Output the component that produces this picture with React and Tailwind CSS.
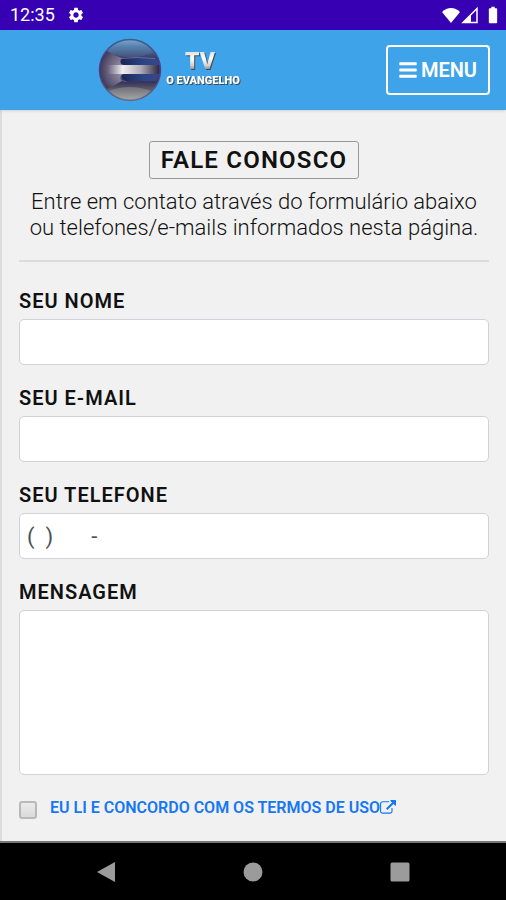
import React, { useState } from 'react';
import { FaBars } from 'react-icons/fa';
import { MdBatteryFull, MdSettings } from 'react-icons/md';

const inputClass =
  'w-full rounded-[5px] border border-[#cfd3d7] bg-white px-[7px] text-[22px] text-[#495057] focus:outline-none focus:border-blue-400';

const Logo = () => (
  <svg viewBox="0 0 146 64" className="h-16 w-auto" role="img" aria-label="TV O Evangelho">
    <defs>
      <linearGradient id="ball" x1="0" y1="0" x2="0" y2="1">
        <stop offset="0" stopColor="#78a6cf" />
        <stop offset="0.12" stopColor="#4f77a4" />
        <stop offset="0.3" stopColor="#373f68" />
        <stop offset="0.7" stopColor="#36345a" />
        <stop offset="0.85" stopColor="#66666f" />
        <stop offset="1" stopColor="#a2a2a6" />
      </linearGradient>
      <linearGradient id="rim" x1="0" y1="0" x2="0" y2="1">
        <stop offset="0" stopColor="#3c5f88" />
        <stop offset="0.5" stopColor="#4b3c94" />
        <stop offset="1" stopColor="#5d6a80" />
      </linearGradient>
      <radialGradient id="side" gradientUnits="userSpaceOnUse" cx="30" cy="32" r="29">
        <stop offset="0" stopColor="#d6d0da" />
        <stop offset="0.3" stopColor="#8d869d" />
        <stop offset="0.7" stopColor="#625b78" />
        <stop offset="1" stopColor="#37304f" />
      </radialGradient>
      <linearGradient id="bar" x1="0" y1="0" x2="1" y2="0">
        <stop offset="0" stopColor="#b9b3c2" stopOpacity="0" />
        <stop offset="0.3" stopColor="#f1eef2" />
        <stop offset="0.65" stopColor="#b0abb6" />
        <stop offset="1" stopColor="#2e2a45" />
      </linearGradient>
      <linearGradient id="slot" x1="0" y1="0" x2="1" y2="0">
        <stop offset="0" stopColor="#1d2453" />
        <stop offset="0.6" stopColor="#2a4586" />
        <stop offset="1" stopColor="#3d4486" />
      </linearGradient>
      <linearGradient id="metal" x1="0" y1="0" x2="0" y2="1">
        <stop offset="0" stopColor="#c9d3da" />
        <stop offset="0.4" stopColor="#ffffff" />
        <stop offset="0.65" stopColor="#d0d0d0" />
        <stop offset="1" stopColor="#2c2c2c" />
      </linearGradient>
    </defs>
    <circle cx="33" cy="32" r="30.5" fill="url(#ball)" stroke="url(#rim)" strokeWidth="1.5" />
    <path d="M10 13Q2 23 3 33Q4 43 10 51Q18 47 25 43H50V20H25Q18 18 10 13Z" fill="url(#side)" />
    <path d="M10 13Q19 3 33 3Q48 3 56 14Q45 20 33 19Q19 19 10 13Z" fill="#83b3dd" opacity="0.15" />
    <path d="M12 53Q22 49 33 49Q44 49 54 53Q45 61 33 61Q21 61 12 53Z" fill="#bcbcbe" opacity="0.3" />
    <path d="M27 20H59Q61 23 62 27H27Q23.500 27 23.500 23.500Q23.500 20 27 20Z" fill="url(#slot)" />
    <rect x="10" y="27" width="52" height="9" fill="url(#bar)" />
    <path d="M27 36H62Q61 40 59 43H27Q23.500 43 23.500 39.500Q23.500 36 27 36Z" fill="url(#slot)" />
    <path d="M25 20.500Q40 18.500 58 20.500M24 36.500Q23 43 29 43.500" fill="none" stroke="#9a86b0" strokeWidth="0.8" opacity="0.7" />
    <g
      className="drop-shadow-[1px_1px_0_#3f4c56]"
      fontFamily="Roboto, sans-serif"
      fontWeight="900"
      textAnchor="middle"
    >
      <text x="103" y="31" fontSize="23" fill="url(#metal)">TV</text>
      <text x="106" y="46" fontSize="11" fill="#ffffff">O EVANGELHO</text>
    </g>
  </svg>
);

const ExternalLinkIcon = () => (
  <svg viewBox="0 0 1792 1792" className="h-4 w-4" fill="currentColor" aria-hidden="true">
    <path d="M1408 928v320q0 119-84.5 203.5t-203.5 84.5h-832q-119 0-203.5-84.5t-84.5-203.5v-832q0-119 84.5-203.5t203.5-84.5h704q14 0 23 9t9 23v64q0 14-9 23t-23 9h-704q-66 0-113 47t-47 113v832q0 66 47 113t113 47h832q66 0 113-47t47-113v-320q0-14 9-23t23-9h64q14 0 23 9t9 23zm384-864v512q0 26-19 45t-45 19-45-19l-176-176-652 652q-10 10-23 10t-23-10l-114-114q-10-10-10-23t10-23l652-652-176-176q-19-19-19-45t19-45 45-19h512q26 0 45 19t19 45z" />
  </svg>
);

const StatusBar = () => (
  <div className="flex h-[30px] items-center justify-between bg-[#3700b3] pl-[10px] pr-[3px] text-white">
    <div className="flex items-center gap-3">
      <span className="text-lg leading-none">12:35</span>
      <MdSettings className="h-[18px] w-[18px]" />
    </div>
    <div className="flex items-center">
      <svg viewBox="0 0 20 18" className="h-[18px] w-5" fill="currentColor" aria-hidden="true">
        <path d="M10 17L1 6Q5 2 10 2T19 6Z" />
      </svg>
      <svg viewBox="0 0 18 18" className="h-[18px] w-[18px]" aria-hidden="true">
        <path d="M2 16.500L16 2.500V16.500Z" fill="none" stroke="currentColor" strokeWidth="1.500" />
        <path d="M2 16.500L10 8.500V16.500Z" fill="currentColor" />
      </svg>
      <MdBatteryFull className="ml-1 h-5 w-5" />
    </div>
  </div>
);

const Field = ({ id, label, children }) => (
  <div className="flex flex-col gap-1.5">
    <label htmlFor={id} className="text-xl font-semibold leading-6 tracking-wider text-[#111]">
      {label}
    </label>
    {children}
  </div>
);

const App = () => {
  const [formData, setFormData] = useState({
    nome: '',
    email: '',
    telefone: '(  )       -',
    mensagem: ''
  });
  const [accepted, setAccepted] = useState(false);

  const handleChange = (e) => {
    setFormData({ ...formData, [e.target.name]: e.target.value });
  };

  return (
    <div className="flex min-h-screen flex-col bg-[#f1f1f1] font-[Roboto,sans-serif]">
      <StatusBar />

      <header className="relative flex h-20 items-center justify-between bg-[#3fa3ea] pl-[97px] pr-4 shadow-sm">
        <Logo />
        <button
          type="button"
          className="flex h-[50px] items-center gap-1 rounded-[4px] border-2 border-white px-[11px] text-xl font-semibold text-white"
        >
          <FaBars className="h-5 w-[18px]" />
          MENU
        </button>
      </header>

      <main className="flex-1 border-l-2 border-[#dcdcdc] pb-5 pl-[17px] pr-[17px] pt-[31px]">
        <div className="flex flex-col items-center text-center">
          <h1 className="rounded-[3px] border border-[#999] px-[11px] text-2xl font-semibold leading-9 tracking-wider text-[#111]">
            FALE CONOSCO
          </h1>
          <p className="mt-[10px] text-[22px] font-light leading-[26px] text-[#111]">
            Entre em contato através do formulário abaixo ou telefones/e-mails informados nesta página.
          </p>
        </div>

        <hr className="mb-[27px] mt-[19px] border-t-2 border-[#dcdcdc]" />

        <form onSubmit={(e) => e.preventDefault()} className="flex flex-col gap-[21px]">
          <Field id="nome" label="SEU NOME">
            <input id="nome" name="nome" type="text" value={formData.nome} onChange={handleChange} className={`${inputClass} h-[46px]`} />
          </Field>
          <Field id="email" label="SEU E-MAIL">
            <input id="email" name="email" type="email" value={formData.email} onChange={handleChange} className={`${inputClass} h-[46px]`} />
          </Field>
          <Field id="telefone" label="SEU TELEFONE">
            <input id="telefone" name="telefone" type="tel" value={formData.telefone} onChange={handleChange} className={`${inputClass} h-[46px]`} />
          </Field>
          <Field id="mensagem" label="MENSAGEM">
            <textarea id="mensagem" name="mensagem" value={formData.mensagem} onChange={handleChange} className={`${inputClass} h-[165px] resize-none py-2`} />
          </Field>

          <div className="flex items-center gap-[13px]">
            <input
              id="termos"
              type="checkbox"
              aria-label="Eu li e concordo com os termos de uso"
              checked={accepted}
              onChange={(e) => setAccepted(e.target.checked)}
              className="mt-1 h-[18px] w-[18px] appearance-none rounded-[3px] border-2 border-[#b9b9b9] bg-linear-to-b from-[#ececec] to-[#dadada] checked:bg-blue-500"
            />
            <a href="#termos-de-uso" className="flex items-center text-base font-semibold text-[#1577f2]">
              EU LI E CONCORDO COM OS TERMOS DE USO
              <ExternalLinkIcon />
            </a>
          </div>
        </form>
      </main>

      <nav className="flex h-[59px] items-center justify-around border-t-2 border-[#777] bg-black px-8 text-[#9b9b9b]">
        <button type="button" aria-label="Voltar">
          <svg viewBox="0 0 20 22" className="h-[22px] w-5" fill="currentColor">
            <path d="M1 11L19 1V21Z" />
          </svg>
        </button>
        <button type="button" aria-label="Início">
          <svg viewBox="0 0 20 20" className="h-5 w-5" fill="currentColor">
            <circle cx="10" cy="10" r="9.500" />
          </svg>
        </button>
        <button type="button" aria-label="Recentes">
          <svg viewBox="0 0 20 20" className="h-5 w-5" fill="currentColor">
            <rect x="0.500" y="0.500" width="19" height="19" rx="1.500" />
          </svg>
        </button>
      </nav>
    </div>
  );
};

export default App;
